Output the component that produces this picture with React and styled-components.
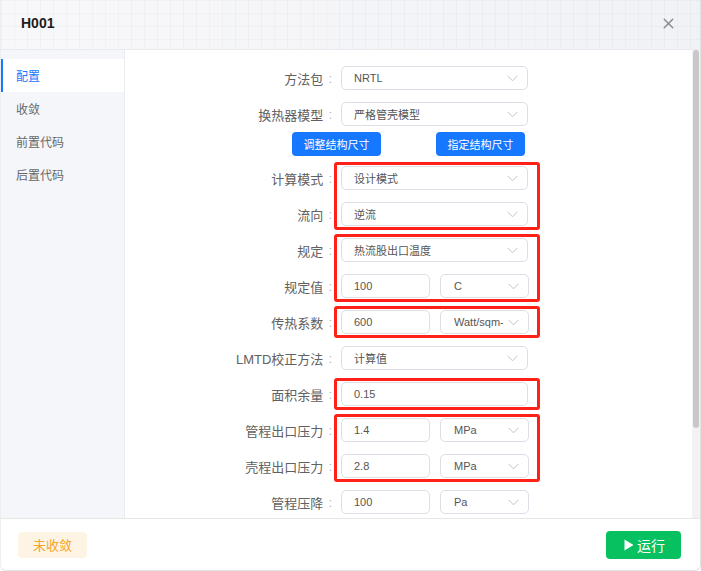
import React from 'react';
import styled, { createGlobalStyle } from 'styled-components';
import { X } from 'lucide-react';

const GlobalStyle = createGlobalStyle`
  html, body { margin: 0; padding: 0; background: #fff; }
  body { font-family: "Liberation Sans", "Noto Sans CJK SC", sans-serif; }
  * { box-sizing: border-box; }
`;

const menu = ['配置', '收敛', '前置代码', '后置代码'];

// each entry is a row, the button bar, or a group of rows boxed in red
const form = [
  { label: '方法包', kind: 'select', value: 'NRTL' },
  { label: '换热器模型', kind: 'select', value: '严格管壳模型' },
  'buttons',
  {
    group: [
      { label: '计算模式', kind: 'select', value: '设计模式' },
      { label: '流向', kind: 'select', value: '逆流' },
    ],
  },
  {
    group: [
      { label: '规定', kind: 'select', value: '热流股出口温度' },
      { label: '规定值', kind: 'split', value: '100', unit: 'C' },
    ],
  },
  { group: [{ label: '传热系数', kind: 'split', value: '600', unit: 'Watt/sqm-' }] },
  { label: 'LMTD校正方法', kind: 'select', value: '计算值' },
  { group: [{ label: '面积余量', kind: 'input', value: '0.15' }] },
  {
    group: [
      { label: '管程出口压力', kind: 'split', value: '1.4', unit: 'MPa' },
      { label: '壳程出口压力', kind: 'split', value: '2.8', unit: 'MPa' },
    ],
  },
  { label: '管程压降', kind: 'split', value: '100', unit: 'Pa' },
];

const Chevron = () => (
  <ChevronSvg width="11" height="7" viewBox="0 0 11 7">
    <polyline points="0.5,0.8 5.5,5.8 10.5,0.8" fill="none" stroke="#c4c4c4" strokeWidth="1" />
  </ChevronSvg>
);

const Control = ({ item }) => {
  if (item.kind === 'select') {
    return (
      <Select $w={187}>
        <Value>{item.value}</Value>
        <Chevron />
      </Select>
    );
  }
  if (item.kind === 'input') {
    return (
      <Input $w={187}>
        <Value>{item.value}</Value>
      </Input>
    );
  }
  return (
    <Split>
      <Input $w={89}>
        <Value>{item.value}</Value>
      </Input>
      <Select $w={89} $unit>
        <Value>{item.unit}</Value>
        <Chevron />
      </Select>
    </Split>
  );
};

const Field = ({ item }) => (
  <Row>
    <Label>
      {item.label}
      <Colon>:</Colon>
    </Label>
    <Control item={item} />
  </Row>
);

const App = () => {
  return (
    <>
      <GlobalStyle />
      <Modal>
        <Header>
          <Title>H001</Title>
          <Close>
            <X size={17} strokeWidth={2} color="#8a8a8a" />
          </Close>
        </Header>

        <Body>
          <Sidebar>
            {menu.map((m, i) => (
              <MenuItem key={m} $active={i === 0}>
                {m}
              </MenuItem>
            ))}
          </Sidebar>

          <Content>
            {form.map((entry, i) => {
              if (entry === 'buttons') {
                return (
                  <ButtonRow key={i}>
                    <BlueButton>调整结构尺寸</BlueButton>
                    <BlueButton>指定结构尺寸</BlueButton>
                  </ButtonRow>
                );
              }
              if (entry.group) {
                return (
                  <Group key={i}>
                    {entry.group.map((item) => (
                      <Field key={item.label} item={item} />
                    ))}
                  </Group>
                );
              }
              return <Field key={i} item={entry} />;
            })}
          </Content>

          <ScrollTrack>
            <ScrollThumb />
          </ScrollTrack>
        </Body>

        <Footer>
          <Badge>未收敛</Badge>
          <RunButton>
            <svg width="10" height="12" viewBox="0 0 10 12">
              <polygon points="0.5,0.5 9.5,6 0.5,11.5" fill="#fff" />
            </svg>
            运行
          </RunButton>
        </Footer>
      </Modal>
    </>
  );
};

export default App;

const Modal = styled.div`
  width: 701px;
  height: 571px;
  display: flex;
  flex-direction: column;
  background: #fff;
  border: 1px solid #e2e2e2;
  border-top: none;
  border-left-color: #eeeeee;
  border-radius: 0 0 6px 6px;
  overflow: hidden;
`;

const Header = styled.div`
  height: 50px;
  flex-shrink: 0;
  display: flex;
  align-items: center;
  justify-content: space-between;
  padding: 0 23px 3px 20px;
  border-bottom: 1px solid #e9eaee;
  background-color: #f4f5f8;
  background-image: linear-gradient(rgba(0, 0, 0, 0.022) 1px, transparent 1px),
    linear-gradient(90deg, rgba(0, 0, 0, 0.022) 1px, transparent 1px),
    linear-gradient(90deg, #f8f8fa 0%, #f1f2f6 100%);
  background-size: 13px 13px, 13px 13px, 100% 100%;
`;

const Title = styled.div`
  font-size: 14px;
  font-weight: 700;
  color: #1d1d1d;
`;

const Close = styled.div`
  display: flex;
  align-items: center;
`;

const Body = styled.div`
  flex: 1;
  display: flex;
  min-height: 0;
`;

const Sidebar = styled.div`
  width: 124px;
  flex-shrink: 0;
  padding-top: 9px;
  background: #f5f6f9;
  border-right: 1px solid #ebecef;
`;

const MenuItem = styled.div`
  height: 33px;
  display: flex;
  align-items: center;
  padding-left: ${({ $active }) => ($active ? '13px' : '15px')};
  font-size: 12px;
  color: ${({ $active }) => ($active ? '#1677ff' : '#666')};
  background: ${({ $active }) => ($active ? '#fff' : 'transparent')};
  border-left: ${({ $active }) => ($active ? '2px solid #1677ff' : 'none')};
`;

const Content = styled.div`
  flex: 1;
  overflow: hidden;
  padding-top: 10px;
`;

const Row = styled.div`
  height: 36px;
  display: flex;
  align-items: center;
`;

const Label = styled.div`
  width: 216px;
  display: flex;
  justify-content: flex-end;
  align-items: center;
  font-size: 13px;
  color: #616161;
  white-space: nowrap;
`;

const Colon = styled.span`
  margin: 0 9px 0 5px;
  color: #b8b8b8;
`;

const Group = styled.div`
  position: relative;

  &::after {
    content: '';
    position: absolute;
    top: 2px;
    bottom: 2px;
    left: 209px;
    width: 200px;
    border: 3px solid #ff2018;
    border-radius: 3px;
    pointer-events: none;
  }
`;

const Box = styled.div`
  width: ${({ $w }) => $w}px;
  height: 24px;
  display: flex;
  align-items: center;
  border: 1px solid #dcdfe6;
  border-radius: 5px;
  background: #fff;
  font-size: 11px;
  color: #555;
`;

const Select = styled(Box)`
  padding: 0 9px 0 ${({ $unit }) => ($unit ? '13px' : '12px')};
  gap: 5px;
`;

const Input = styled(Box)`
  padding: 0 12px;
`;

const Value = styled.span`
  flex: 1;
  min-width: 0;
  overflow: hidden;
  white-space: nowrap;
`;

const ChevronSvg = styled.svg`
  flex-shrink: 0;
`;

const Split = styled.div`
  display: flex;
  gap: 10px;
`;

const ButtonRow = styled.div`
  height: 28px;
  display: flex;
  justify-content: space-between;
  align-items: flex-start;
  width: 233px;
  margin-left: 167px;
`;

const BlueButton = styled.div`
  width: 89px;
  height: 24px;
  display: flex;
  align-items: center;
  justify-content: center;
  border-radius: 4px;
  background: #1677ff;
  color: #fff;
  font-size: 11px;
`;

const ScrollTrack = styled.div`
  width: 8px;
  flex-shrink: 0;
  background: #f3f3f3;
  padding: 0 1px;
`;

const ScrollThumb = styled.div`
  height: 378px;
  border-radius: 3px;
  background: #c8c8c8;
`;

const Footer = styled.div`
  height: 52px;
  flex-shrink: 0;
  display: flex;
  align-items: center;
  justify-content: space-between;
  padding: 0 19px 0 17px;
  border-top: 1px solid #e6e6e6;
`;

const Badge = styled.div`
  width: 69px;
  height: 26px;
  display: flex;
  align-items: center;
  justify-content: center;
  border-radius: 4px;
  background: #fdf4e6;
  color: #f5a623;
  font-size: 13px;
`;

const RunButton = styled.div`
  width: 75px;
  height: 28px;
  display: flex;
  align-items: center;
  justify-content: center;
  gap: 3px;
  padding-left: 2px;
  border-radius: 4px;
  background: #07c160;
  color: #fff;
  font-size: 14px;
`;
